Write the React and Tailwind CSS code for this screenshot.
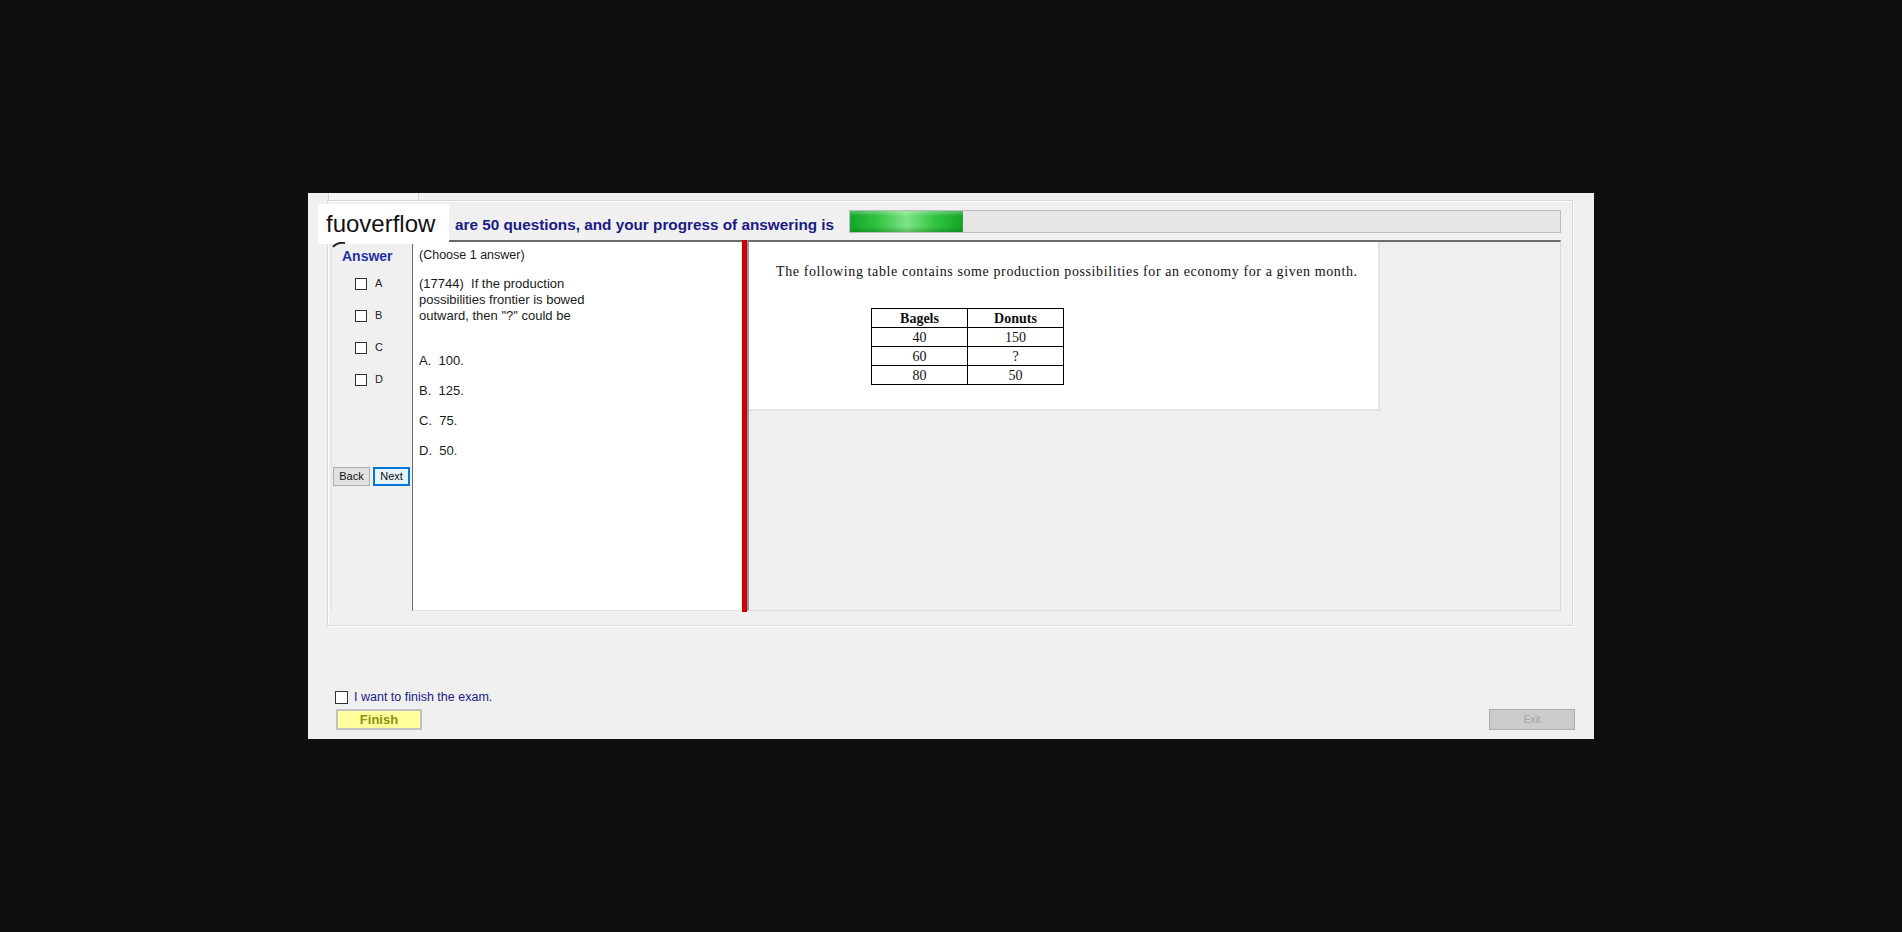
export default function App() {
  return (
    <div className="w-full h-[932px] bg-[#0f0f0f] pt-[193px] pl-[308px] font-['Liberation_Sans',Arial,sans-serif]">
      <div className="relative w-[1286px] h-[546px] bg-[#f0f0f0] flex flex-col">
        {/* tab strip remnant */}
        <div className="h-[7px] flex">
          <div className="ml-[20px] w-[91px] border-x border-[#d4d4d4] bg-[#f5f5f5]" />
        </div>

        {/* group box */}
        <div className="ml-[19px] w-[1246px] h-[426px] border border-[#d9d9d9] shadow-[inset_1px_1px_0_#ffffff,1px_1px_0_#ffffff] pt-[2px] pb-[14px] pl-[3px] pr-[10px]">
          <div className="w-[1231px] h-[408px] flex flex-col">
            {/* title row */}
            <div className="h-[37px] flex items-center pl-[124px] pr-[1px]">
              <span className="text-[15.3px] font-bold text-[#1b1b86] whitespace-nowrap pt-[7px]">
                are 50 questions, and your progress of answering is
              </span>
              <div className="ml-auto w-[712px] h-[23px] border border-[#bcbcbc] bg-[#e6e6e6] flex">
                <div className="w-[113px] h-full bg-[linear-gradient(to_right,#12a626,#33c443_25%,#7fe487_50%,#33c443_75%,#12a626)] shadow-[inset_0_3px_3px_rgba(255,255,255,0.25),inset_0_-3px_3px_rgba(0,80,0,0.25)]" />
              </div>
            </div>

            {/* main row */}
            <div className="flex h-[371px]">
              {/* answer column */}
              <div className="w-[81px] flex flex-col border-l border-[#e2e2e2]">
                <div className="pl-[10px] pt-[7px] text-[14px] font-bold text-[#1f30a4] leading-[18px]">Answer</div>
                <div className="flex flex-col gap-[20px] pl-[23px] mt-[13px]">
                  {["A", "B", "C", "D"].map((l) => (
                    <div key={l} className="flex items-start h-[12px]">
                      <div className="w-[12px] h-[12px] border border-[#333333] bg-white" />
                      <span className="ml-[8px] text-[11px] leading-[11px] text-[#222222]">{l}</span>
                    </div>
                  ))}
                </div>
                <div className="flex gap-[3px] pl-[1px] mt-[81px]">
                  <button className="w-[37px] h-[19px] bg-[#e1e1e1] border border-[#adadad] text-[11px] leading-[17px] text-[#111111]">Back</button>
                  <button className="w-[37px] h-[19px] bg-[#e5f1fb] border-2 border-[#0078d7] text-[11px] leading-[15px] text-[#111111]">Next</button>
                </div>
              </div>

              {/* question box */}
              <div className="w-[330px] h-full bg-white border-l border-t-2 border-[#6a6a6a] border-b border-b-[#e3e3e3] pl-[6px] pt-[5px] text-[#1a1a1a]">
                <div className="text-[12.5px] leading-[16px]">(Choose 1 answer)</div>
                <div className="text-[13px] leading-[16px] mt-[13px]">
                  (17744)&nbsp; If the production<br />
                  possibilities frontier is bowed<br />
                  outward, then "?" could be
                </div>
                <div className="flex flex-col gap-[14px] mt-[29px] text-[13px] leading-[16px]">
                  <div>A.&nbsp; 100.</div>
                  <div>B.&nbsp; 125.</div>
                  <div>C.&nbsp; 75.</div>
                  <div>D.&nbsp; 50.</div>
                </div>
              </div>

              {/* splitter */}
              <div className="w-[5px] h-[372px] bg-[linear-gradient(to_right,#b00000,#e00000_40%,#c40000)]" />

              {/* right panel */}
              <div className="w-[814px] h-full border-t-2 border-t-[#6d6d6d] border-l-2 border-l-[#9893ab] border-r border-r-[#d8d8d8] border-b border-b-[#dddddd] bg-[#efefef]">
                <div className="w-[631px] h-[169px] bg-white border-r-2 border-b-2 border-[#e4e4e4] pl-[27px] pt-[21px]">
                  <div className="font-['Liberation_Serif','Times_New_Roman',serif] text-[14px] leading-[18px] tracking-[0.6px] text-[#111111] whitespace-nowrap">
                    The following table contains some production possibilities for an economy for a given month.
                  </div>
                  <table className="ml-[95px] mt-[27px] border-collapse font-['Liberation_Serif','Times_New_Roman',serif] text-[14px] text-[#111111]">
                    <tbody>
                      <tr className="h-[19px]">
                        <td className="w-[96px] border border-black text-center font-bold leading-[17px]">Bagels</td>
                        <td className="w-[96px] border border-black text-center font-bold leading-[17px]">Donuts</td>
                      </tr>
                      <tr className="h-[19px]">
                        <td className="border border-black text-center leading-[17px]">40</td>
                        <td className="border border-black text-center leading-[17px]">150</td>
                      </tr>
                      <tr className="h-[19px]">
                        <td className="border border-black text-center leading-[17px]">60</td>
                        <td className="border border-black text-center leading-[17px]">?</td>
                      </tr>
                      <tr className="h-[19px]">
                        <td className="border border-black text-center leading-[17px]">80</td>
                        <td className="border border-black text-center leading-[17px]">50</td>
                      </tr>
                    </tbody>
                  </table>
                </div>
              </div>
            </div>
          </div>
        </div>

        {/* bottom area */}
        <div className="flex-1 flex items-end justify-between pl-[27px] pr-[19px] pb-[9px]">
          <div className="flex flex-col">
            <div className="flex items-center">
              <div className="w-[13px] h-[13px] border border-[#333333] bg-white" />
              <span className="ml-[6px] text-[12.5px] leading-[14px] text-[#1b1b86]">I want to finish the exam.</span>
            </div>
            <button className="mt-[5px] ml-[1px] w-[86px] h-[21px] bg-[#ffff9c] border-2 border-[#c2c2c2] text-[13px] font-bold leading-[17px] text-[#8e8e10]">
              Finish
            </button>
          </div>
          <button className="w-[86px] h-[21px] bg-[#cccccc] border border-[#adadad] text-[10px] leading-[19px] text-[#a3a3a3]">
            Exit
          </button>
        </div>

        {/* watermark overlay */}
        <div className="absolute left-[10px] top-[11px] w-[131px] h-[40px] bg-white flex items-center pl-[8px]">
          <span className="text-[24px] leading-none text-[#111111] font-['Liberation_Sans',Arial,sans-serif]">fuoverflow</span>
        </div>
        <svg className="absolute left-[24px] top-[49px]" width="14" height="6" viewBox="0 0 14 6">
          <path d="M1 5 Q5 0 13 1" stroke="#222" strokeWidth="2" fill="none" />
        </svg>
      </div>
    </div>
  );
}
